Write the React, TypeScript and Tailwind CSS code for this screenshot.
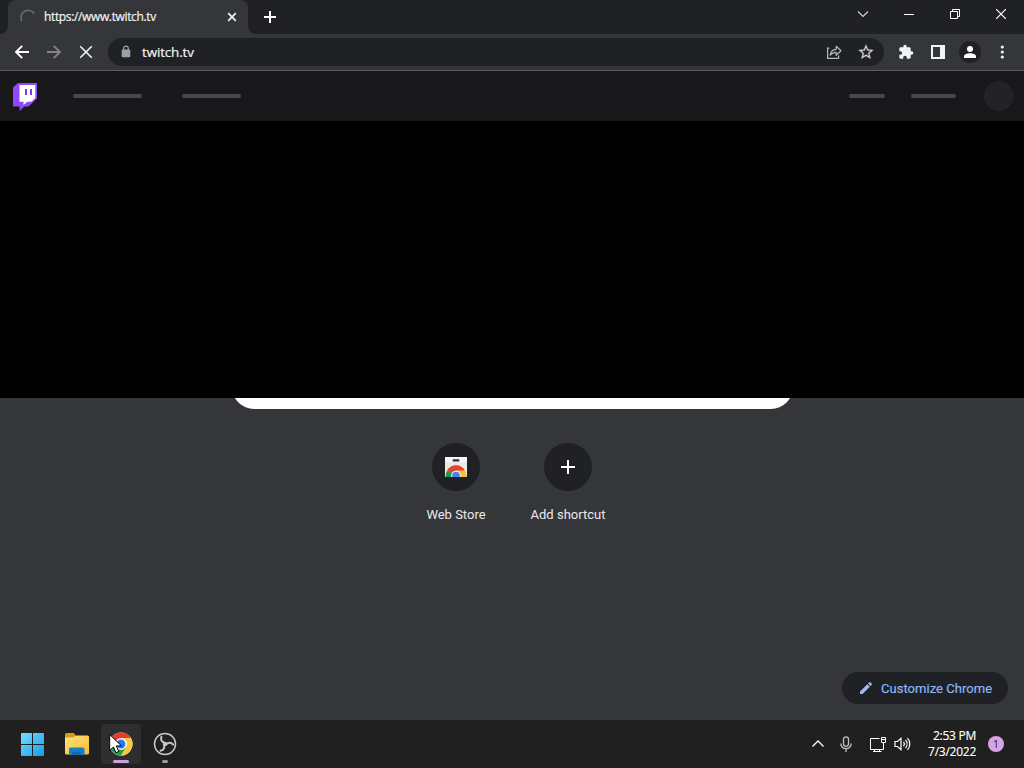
import type { ReactNode } from "react";

function Cell({ children, className = "w-8" }: { children: ReactNode; className?: string }) {
  return <div className={`flex h-full shrink-0 items-center justify-center ${className}`}>{children}</div>;
}

function TabStrip() {
  return (
    <div className="flex h-[34px] bg-[#202124]">
      <div className="flex w-2 items-end">
        <svg width="8" height="8"><path d="M8 0v8H0a8 8 0 0 0 8-8z" fill="#35363a" /></svg>
      </div>
      <div className="flex w-60 items-center rounded-t-lg bg-[#35363a] pl-3">
        <svg width="16" height="16" viewBox="0 0 16 16" fill="none" stroke="#5b6e76" strokeWidth="1.7">
          <path d="M2 12A7 7 0 0 1 14.200 4.800" />
        </svg>
        <span className="ml-2 w-[172px] text-[12px] leading-4 tracking-[-0.36px] text-[#f1f3f4] [-webkit-text-stroke:0.2px_#f1f3f4]">https://www.twitch.tv</span>
        <svg className="ml-2" width="16" height="16" viewBox="0 0 16 16" stroke="#f1f3f4" strokeWidth="1.7">
          <path d="M4.2 4.2l7.6 7.6M11.8 4.2l-7.6 7.6" />
        </svg>
      </div>
      <div className="flex w-2 items-end">
        <svg width="8" height="8"><path d="M0 0v8h8a8 8 0 0 1-8-8z" fill="#35363a" /></svg>
      </div>
      <Cell className="w-7">
        <svg width="14" height="14" viewBox="0 0 14 14" stroke="#fff" strokeWidth="2"><path d="M7 1v12M1 7h12" /></svg>
      </Cell>
      <div className="ml-auto flex h-7">
        <Cell className="w-[46px]">
          <svg width="12" height="12" viewBox="0 0 12 12" fill="none" stroke="#d5d6d8" strokeWidth="1.1"><path d="M1 3.5l5 5 5-5" /></svg>
        </Cell>
        <Cell className="w-[46px]">
          <svg width="10" height="10" viewBox="0 0 10 10" stroke="#fff"><path d="M0 5.5h10" /></svg>
        </Cell>
        <Cell className="w-[46px]">
          <svg width="10" height="10" viewBox="0 0 10 10" fill="none" stroke="#fff"><path d="M.5 2.5h7v7h-7zM2.5 2.5v-2h7v7h-2" /></svg>
        </Cell>
        <Cell className="w-[46px]">
          <svg width="10" height="10" viewBox="0 0 10 10" stroke="#fff" strokeWidth="1.2"><path d="M0 0l10 10M10 0L0 10" /></svg>
        </Cell>
      </div>
    </div>
  );
}

function Toolbar() {
  return (
    <div className="flex h-[37px] items-center border-b border-[#5d5e61] bg-[#35363a] px-1.5">
      <Cell>
        <svg width="16" height="16" viewBox="0 0 16 16" fill="none" stroke="#fff" strokeWidth="1.9"><path d="M15 8H2.2M8.2 1.8L2 8l6.2 6.2" /></svg>
      </Cell>
      <Cell>
        <svg width="16" height="16" viewBox="0 0 16 16" fill="none" stroke="#828386" strokeWidth="1.9"><path d="M1 8h12.8M7.8 1.8L14 8l-6.2 6.2" /></svg>
      </Cell>
      <Cell>
        <svg width="14" height="14" viewBox="0 0 14 14" stroke="#f1f3f4" strokeWidth="1.6"><path d="M1.2 1.2l11.6 11.6M12.8 1.2L1.2 12.8" /></svg>
      </Cell>
      <div className="mx-1.5 flex h-7 flex-1 items-center rounded-full bg-[#202124] pl-3">
        <svg className="mb-px" width="12" height="13" viewBox="0 0 12 13">
          <rect x="1.7" y="4.5" width="8.6" height="7.8" rx="1" fill="#9aa0a6" />
          <path d="M3.7 5V3.4a2.3 2.3 0 0 1 4.6 0V5" fill="none" stroke="#9aa0a6" strokeWidth="1.2" />
        </svg>
        <span className="ml-[10px] text-[13.5px] leading-5 tracking-[-0.18px] text-[#f1f3f4] [-webkit-text-stroke:0.2px_#f1f3f4]">twitch.tv</span>
        <div className="ml-auto mr-0.5 flex h-7">
          <Cell>
            <svg width="16" height="16" viewBox="0 0 16 16" fill="none" stroke="#b4b7ba" strokeWidth="1.2">
              <path d="M3.500 4.200H1.600v10.200h11v-2.800" />
              <path d="M4.200 11.200c.4-3.900 2.300-5.800 6-5.900V2.300L15 6.800l-4.800 4.500V8.300c-2.900 0-4.500.9-6 2.900z" strokeLinejoin="round" />
            </svg>
          </Cell>
          <Cell>
            <svg width="18" height="18" viewBox="0 0 24 24" fill="#d0d2d5" stroke="#d0d2d5" strokeWidth=".3">
              <path d="M22 9.240l-7.190-.62L12 2 9.190 8.630 2 9.240l5.460 4.730L5.820 21 12 17.270 18.180 21l-1.630-7.030L22 9.240zM12 15.400l-3.760 2.270 1-4.280-3.320-2.880 4.380-.38L12 6.100l1.710 4.040 4.380.38-3.320 2.880 1 4.280L12 15.400z" />
            </svg>
          </Cell>
        </div>
      </div>
      <Cell>
        <svg width="16" height="16" viewBox="0 0 24 24" fill="#f1f3f4">
          <path d="M20.500 11H19V7c0-1.100-.9-2-2-2h-4V3.500a2.500 2.500 0 0 0-5 0V5H4c-1.100 0-1.990.9-1.990 2v3.800H3.500c1.490 0 2.700 1.210 2.700 2.700s-1.210 2.700-2.700 2.700H2V20c0 1.100.9 2 2 2h3.800v-1.500c0-1.490 1.210-2.700 2.700-2.700 1.490 0 2.700 1.210 2.700 2.700V22H17c1.100 0 2-.9 2-2v-4h1.500a2.500 2.500 0 0 0 0-5z" />
        </svg>
      </Cell>
      <Cell>
        <svg width="14" height="14" viewBox="0 0 14 14"><path fillRule="evenodd" fill="#f1f3f4" d="M0 0h14v14H0zM2 2v10h7V2z" /></svg>
      </Cell>
      <Cell>
        <div className="flex size-[22px] items-center justify-center rounded-full bg-[#202124]">
          <svg width="12" height="12" viewBox="0 0 12 12" fill="#fff"><circle cx="6" cy="3" r="3" /><path d="M0 12v-1.500C0 8.500 3 7.300 6 7.300s6 1.200 6 3.200V12z" /></svg>
        </div>
      </Cell>
      <Cell>
        <svg width="4" height="14" viewBox="0 0 4 14" fill="#f1f3f4"><circle cx="2.300" cy="2" r="1.600" /><circle cx="2.300" cy="7" r="1.600" /><circle cx="2.300" cy="12" r="1.600" /></svg>
      </Cell>
    </div>
  );
}

function TwitchHeader() {
  return (
    <div className="flex h-[50px] items-center bg-[#18181b] pl-[13px] pr-2.5">
      <svg className="mt-0.5" width="24" height="28" viewBox="0 0 24 28">
        <path d="M5 0h19v15.500l-8.500 8H11.500L6.500 28v-4.500H0V4.500z" fill="#9147ff" />
        <path d="M6.500 2H22.300v13l-4 3.800h-4L10.500 22v-3.200h-4z" fill="#fff" />
        <path d="M12 6h2v6h-2zM17 6h2v6h-2z" fill="#7a3fd8" />
      </svg>
      <div className="ml-9 h-1 w-[69px] rounded-full bg-[#47474a]" />
      <div className="ml-10 h-1 w-[59px] rounded-full bg-[#47474a]" />
      <div className="ml-auto h-1 w-9 rounded-full bg-[#47474a]" />
      <div className="ml-[26px] h-1 w-[45px] rounded-full bg-[#47474a]" />
      <div className="ml-7 size-[30px] rounded-full bg-[#232326]" />
    </div>
  );
}

function Shortcut({ label, children }: { label: string; children: ReactNode }) {
  return (
    <div className="flex w-28 flex-col items-center">
      <div className="flex size-12 items-center justify-center rounded-full bg-[#202124]">{children}</div>
      <span className="mt-4 whitespace-nowrap font-['Roboto',sans-serif] text-[13px] leading-4 text-[#e8eaed]">{label}</span>
    </div>
  );
}

function NewTabPage() {
  return (
    <div className="flex h-[322px] flex-col items-center bg-[#35363a]">
      <div className="ml-[232px] flex h-[11px] w-[561px] items-end self-start overflow-hidden">
        <div className="h-11 w-full shrink-0 rounded-full bg-white" />
      </div>
      <div className="mt-[34px] flex">
        <Shortcut label="Web Store">
          <svg width="22" height="20" viewBox="0 0 22 20">
            <defs><clipPath id="bag"><rect width="22" height="20" rx="1" /></clipPath></defs>
            <g clipPath="url(#bag)">
              <rect width="22" height="20" fill="#e9e9e9" />
              <rect y="0" width="22" height="5" fill="#f5f5f5" />
              <rect x="7.500" y="2.200" width="7" height="2.200" rx="1" fill="#303134" />
              <circle cx="11" cy="18.500" r="10.200" fill="#fbc02d" />
              <path d="M11 18.500L2.200 13.400A10.200 10.200 0 0 1 19.800 13.400z" fill="#e34133" />
              <path d="M11 18.500L2.200 13.400A10.200 10.200 0 0 0 .9 20H9z" fill="#1a9a50" />
              <path d="M11 13.400h8.800a10.200 10.200 0 0 1 1.300 6.600H14z" fill="#fbc02d" />
              <circle cx="11" cy="18.500" r="4.800" fill="#f3f3f3" />
              <circle cx="11" cy="18.500" r="3.800" fill="#4285f4" />
            </g>
          </svg>
        </Shortcut>
        <Shortcut label="Add shortcut">
          <svg width="14" height="14" viewBox="0 0 14 14" fill="#fff"><path d="M6 0h2v6h6v2H8v6H6V8H0V6h6z" /></svg>
        </Shortcut>
      </div>
      <button className="mb-4 mr-4 mt-auto flex h-8 w-[166px] items-center self-end rounded-full bg-[#202124] pl-4 font-['Roboto',sans-serif] text-[13px] text-[#8ab4f8] [-webkit-text-stroke:0.2px_#8ab4f8]">
        <svg width="16" height="16" viewBox="0 0 24 24" fill="#9dbdf2">
          <path d="M3 17.250V21h3.750L17.810 9.940l-3.750-3.750L3 17.250zM20.710 7.040a1 1 0 0 0 0-1.410l-2.340-2.340a1 1 0 0 0-1.410 0l-1.830 1.830 3.750 3.750 1.830-1.830z" />
        </svg>
        <span className="ml-[7px] whitespace-nowrap pt-px tracking-[0.04px]">Customize Chrome</span>
      </button>
    </div>
  );
}

function Taskbar() {
  return (
    <div className="flex h-12 items-center bg-[#202020] pl-[10px]">
      <Cell className="w-11">
        <svg width="24" height="24" viewBox="0 0 24 24">
          <defs><linearGradient id="win" x1="0" y1="0" x2="1" y2="1"><stop stopColor="#75defd" /><stop offset="1" stopColor="#159be8" /></linearGradient></defs>
          <path d="M1 2a1 1 0 0 1 1-1h10v11H1zM13 1h10a1 1 0 0 1 1 1v10H13zM1 13h11v11H2a1 1 0 0 1-1-1zM13 13h11v10a1 1 0 0 1-1 1H13z" fill="url(#win)" />
        </svg>
      </Cell>
      <Cell className="w-[45px]">
        <svg width="26" height="24" viewBox="0 0 26 24">
          <defs><linearGradient id="folder" x1="0" y1="0" x2="1" y2="1"><stop stopColor="#ffe181" /><stop offset="1" stopColor="#f7bd2d" /></linearGradient></defs>
          <path d="M1 2.500A1.500 1.500 0 0 1 2.500 1h7.300l2 2.500L9 8H1z" fill="#d89b16" />
          <path d="M1 5.500h8l3-2h11.500A1.500 1.500 0 0 1 25 5v16a1.500 1.500 0 0 1-1.500 1.500h-21A1.500 1.500 0 0 1 1 21z" fill="url(#folder)" />
          <path d="M5 22.700V17a1.500 1.500 0 0 1 1.500-1.500h12.500a1.500 1.500 0 0 1 1.500 1.500v5.700z" fill="#157fca" />
          <path d="M8.500 22.700v-2a1 1 0 0 1 1-1H16a1 1 0 0 1 1 1v2z" fill="#0f69ad" />
        </svg>
      </Cell>
      <div className="relative ml-[2px] flex h-10 w-10 flex-col items-center rounded bg-[#2e2e2e]">
        <svg className="mt-2" width="24" height="24" viewBox="0 0 24 24">
          <circle cx="12" cy="12" r="11.500" fill="#fff" />
          <path d="M2.040 6.250A11.500 11.500 0 0 1 21.960 6.250H12A5.750 5.750 0 0 0 7.020 14.870z" fill="#e33b2e" />
          <path d="M21.960 6.250A11.500 11.500 0 0 1 12 23.500l4.980-8.630A5.750 5.750 0 0 0 12 6.250z" fill="#fcc934" />
          <path d="M12 23.500A11.500 11.500 0 0 1 2.040 6.250l4.980 8.620a5.750 5.750 0 0 0 9.960 0z" fill="#229c4d" />
          <circle cx="12" cy="12" r="5.700" fill="#fff" /><circle cx="12" cy="12" r="4.500" fill="#287be6" />
        </svg>
        <div className="mt-1 h-[3px] w-4 rounded-full bg-[#d0a0da]" />
        <svg className="absolute left-[8px] top-[9px]" width="14" height="21" viewBox="0 0 14 21">
          <path d="M.7 1.500v16l3.800-3.500 2.400 5.700 2.900-1.200-2.500-5.600h5.200z" fill="#fff" stroke="#000" strokeWidth="1" />
        </svg>
      </div>
      <div className="ml-1 flex h-10 w-10 flex-col items-center">
        <svg className="mt-2" width="24" height="24" viewBox="0 0 24 24" fill="none" stroke="#c8c8c8">
          <circle cx="12" cy="12" r="10.500" fill="#222023" strokeWidth="1.500" />
          <g strokeWidth="2" strokeLinecap="round">
            <path d="M8.400 4.800c-1 3 .3 5.200 3.400 6 1.200.4 1.500 1.200.9 2.200" />
            <path d="M8.400 4.800c-1 3 .3 5.200 3.400 6 1.200.4 1.500 1.200.9 2.200" transform="rotate(120 12 12)" />
            <path d="M8.400 4.800c-1 3 .3 5.200 3.400 6 1.200.4 1.500 1.200.9 2.200" transform="rotate(240 12 12)" />
          </g>
        </svg>
        <div className="mt-1 h-[3px] w-1.5 rounded-full bg-[#999]" />
      </div>
      <div className="ml-auto flex h-full items-center">
        <svg className="mr-4" width="12" height="8" viewBox="0 0 12 8" fill="none" stroke="#fff" strokeWidth="1.300"><path d="M.5 6.500L6 1l5.500 5.500" /></svg>
        <svg className="mr-[17px]" width="12" height="16" viewBox="0 0 12 16" fill="none" stroke="#c9bfca" strokeWidth="1.300"><rect x="3.500" y=".8" width="5" height="9.500" rx="2.500" /><path d="M.8 7.500a5.200 5.200 0 0 0 10.400 0M6 12.700V16" /></svg>
        <svg className="mr-2" width="17" height="17" viewBox="0 0 17 17" fill="none" stroke="#fff"><path d="M10.500 2.500h-9v11h13v-7M5.500 13.500v2M10.500 13.500v2M4 15.500h8.500" /><path d="M12.500 1.500h4v5h-4zM12.500 3.500h4" /></svg>
        <svg className="mr-[15px]" width="17" height="16" viewBox="0 0 17 16" fill="none" stroke="#fff" strokeWidth="1.200"><path d="M1 5.500h2.500L7 2.300v11.400l-3.500-3.200H1zM9.500 5.800a3.500 3.500 0 0 1 0 4.400M11.500 4a6 6 0 0 1 0 8M13.500 2.200a8.500 8.500 0 0 1 0 11.600" /></svg>
        <div className="mr-3 w-[50px] whitespace-nowrap text-[12px] leading-4 tracking-[-0.25px] text-white [-webkit-text-stroke:0.15px_#fff]">
          <div className="flex justify-end">2:53 PM</div>
          <div className="flex justify-end">7/3/2022</div>
        </div>
        <div className="mr-5 flex size-4 items-center justify-center rounded-full bg-[#d8a3e2] text-[11px] leading-4 text-[#30203a]">1</div>
      </div>
    </div>
  );
}

export default function App() {
  return (
    <div className="flex h-[768px] w-[1024px] flex-col overflow-hidden bg-black font-['Open_Sans','Noto_Sans',sans-serif]">
      <TabStrip />
      <Toolbar />
      <TwitchHeader />
      <div className="h-[277px] bg-black" />
      <NewTabPage />
      <Taskbar />
    </div>
  );
}
